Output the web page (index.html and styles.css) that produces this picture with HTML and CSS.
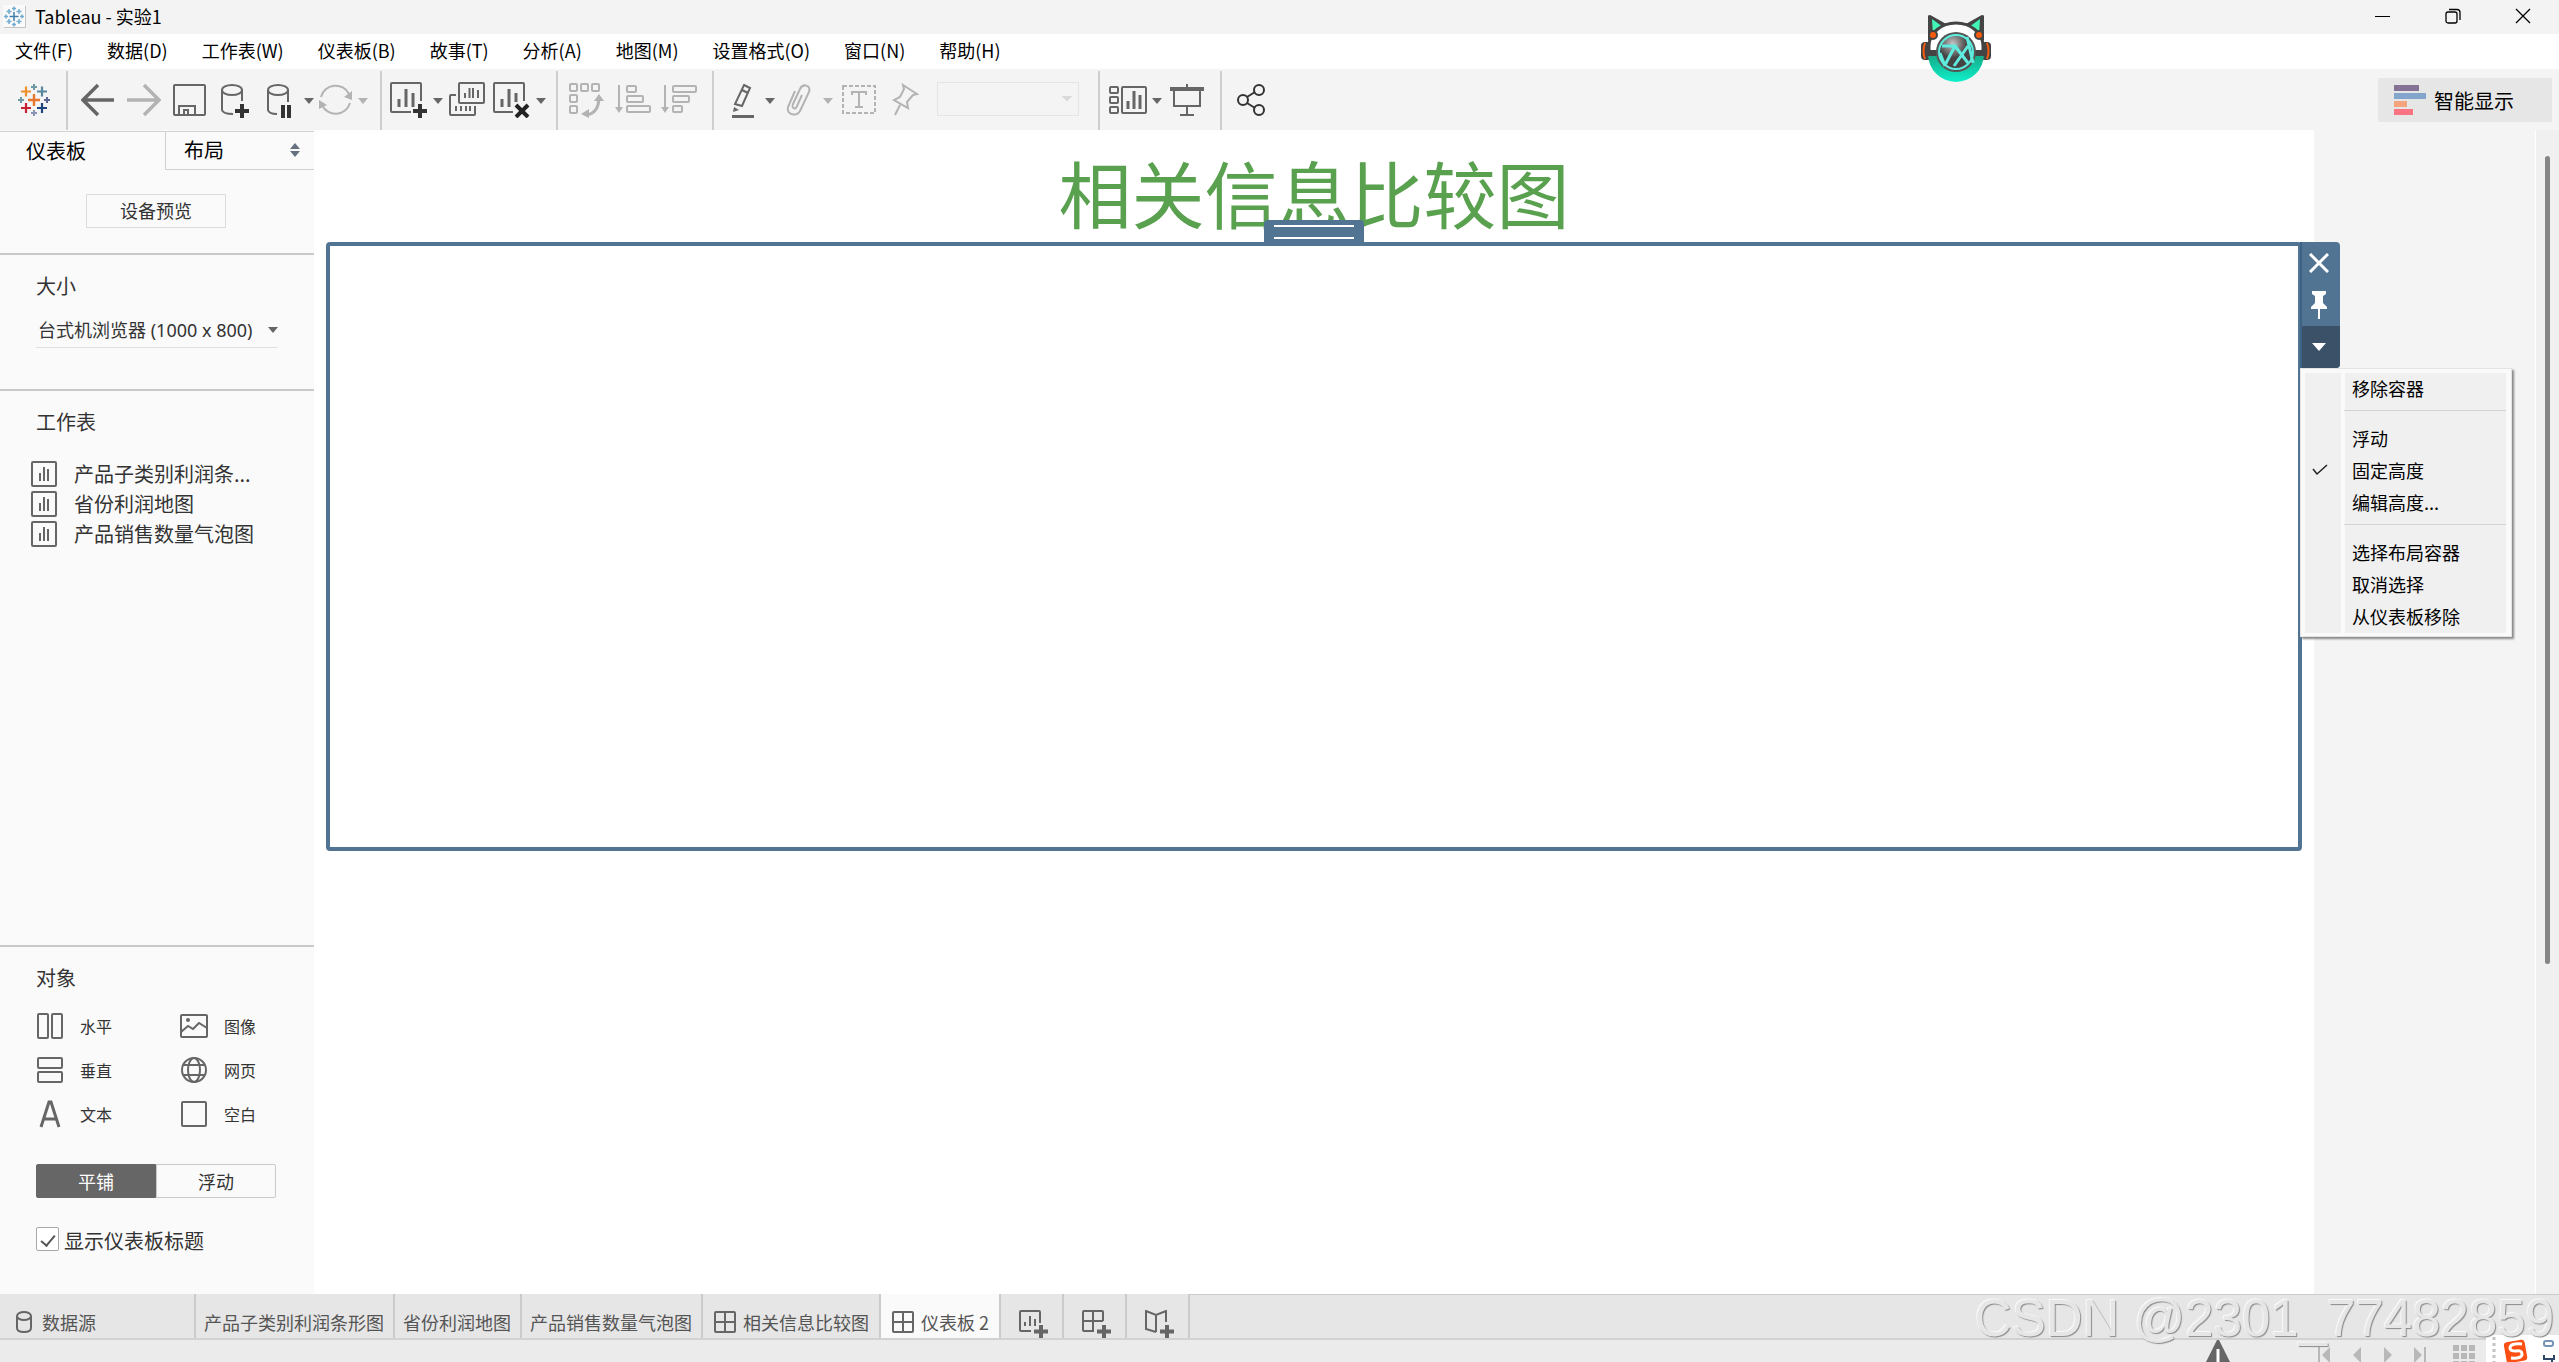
FILE: index.html
```html
<!DOCTYPE html>
<html lang="zh-CN">
<head>
    <meta charset="UTF-8">
    <meta name="viewport" content="width=device-width, initial-scale=1.0">
    <title>Tableau - 实验1</title>
    <link rel="stylesheet" href="styles.css">
</head>
<body>
    <!-- shared icons -->
    <svg class="sprite" aria-hidden="true">
        <symbol id="caret" viewBox="0 0 10 6"><path d="M0 0h10L5 6z" fill="currentColor"/></symbol>
        <symbol id="sheet" viewBox="0 0 26 26">
            <rect x="1" y="1" width="24" height="24" rx="1" fill="none" stroke="#666" stroke-width="2"/>
            <path d="M9 12v8M13 6v14M17 8v12" stroke="#666" stroke-width="2"/>
        </symbol>
        <symbol id="board" viewBox="0 0 22 22">
            <path d="M2 1h18q1 0 1 1v18q0 1-1 1H2q-1 0-1-1V2q0-1 1-1zM11 1v20M1 11h20" fill="none" stroke="#666" stroke-width="2"/>
        </symbol>
    </svg>

    <header class="titlebar">
        <svg class="app-icon" width="23" height="23" viewBox="0 0 23 23">
            <rect width="22" height="22" fill="#fafafa"/>
            <path d="M22.500 1v21.500H1" fill="none" stroke="#c4c4c4"/>
            <path d="M11 7v9M6.500 11.500h9" stroke="#3f7fa8" stroke-width="1.500"/>
            <path d="M6 4v5M3.500 6.500h5M16 4v5M13.500 6.500h5M6 14v5M3.500 16.500h5M16 14v5M13.500 16.500h5M11 1.500v4M9 3.500h4M11 17.500v4M9 19.500h4M3 9.500v4M1 11.500h4M19 9.500v4M17 11.500h4" stroke="#72acd0" stroke-width="1.500"/>
        </svg>
        <span class="app-title">Tableau - 实验1</span>
        <div class="window-buttons">
            <button aria-label="最小化"><svg width="16" height="16"><path d="M0 8.500h15" stroke="#000"/></svg></button>
            <button aria-label="还原"><svg width="16" height="16" fill="none" stroke="#000" stroke-width="1.300"><rect x="1" y="4" width="11" height="11" rx="2"/><path d="M4 1.500h8q3 0 3 3V12"/></svg></button>
            <button aria-label="关闭"><svg width="16" height="16"><path d="M1 1l14 14M15 1L1 15" stroke="#000" stroke-width="1.300"/></svg></button>
        </div>
    </header>

    <nav class="menubar">
        <button>文件(F)</button>
        <button>数据(D)</button>
        <button>工作表(W)</button>
        <button>仪表板(B)</button>
        <button>故事(T)</button>
        <button>分析(A)</button>
        <button>地图(M)</button>
        <button>设置格式(O)</button>
        <button>窗口(N)</button>
        <button>帮助(H)</button>
    </nav>

    <div class="toolbar">
        <div class="group group-logo">
            <button class="tool" aria-label="起始页">
                <svg width="34" height="36" viewBox="0 0 34 36" fill="none">
                    <path d="M17 12v12M11 18h12" stroke="#e8762c" stroke-width="2.400"/>
                    <path d="M9 4.500v10M4 9.500h10" stroke="#eb912b" stroke-width="2.200"/>
                    <path d="M25 4.500v10M20 9.500h10" stroke="#59879b" stroke-width="2.200"/>
                    <path d="M9 21v10M4 26h10" stroke="#c72035" stroke-width="2.200"/>
                    <path d="M25 21v10M20 26h10" stroke="#1f447e" stroke-width="2.200"/>
                    <path d="M17 2v6M14 5h6M4 15v6M1 18h6" stroke="#7099a5" stroke-width="2"/>
                    <path d="M30 15v6M27 18h6" stroke="#5b6591" stroke-width="2"/>
                    <path d="M17 28v6M14 31h6" stroke="#8a93b5" stroke-width="2"/>
                </svg>
            </button>
        </div>

        <div class="group group-file">
            <button class="tool" aria-label="撤消"><svg width="34" height="36" fill="none" stroke="#666" stroke-width="3.500"><path d="M33 18H3M17 3L2 18l15 15"/></svg></button>
            <button class="tool off" aria-label="重做"><svg width="34" height="36" fill="none" stroke="#b3b3b3" stroke-width="3.500"><path d="M0 18h31M17 3l15 15-15 15"/></svg></button>
            <button class="tool" aria-label="保存"><svg width="34" height="36" fill="none" stroke="#666" stroke-width="2"><rect x="1" y="3" width="31" height="30" rx="1"/><path d="M6 33V24h16v9M11 33v-5h4v5"/></svg></button>
            <button class="tool" aria-label="新建数据源"><svg width="34" height="36" fill="none" stroke="#666" stroke-width="2"><ellipse cx="13" cy="8" rx="10" ry="5"/><path d="M3 8v20q1 4 11 4M23 8v11"/><path d="M23 22v14M16 29h14" stroke="#333" stroke-width="4"/></svg></button>
            <button class="tool" aria-label="暂停自动更新"><svg width="34" height="36" fill="none" stroke="#666" stroke-width="2"><ellipse cx="13" cy="8" rx="10" ry="5"/><path d="M3 8v20q1 4 9 4M23 8v12"/><path d="M18 23v13M24 23v13" stroke="#333" stroke-width="4"/></svg></button>
            <button class="caret" aria-label="更多更新选项"><svg width="10" height="6"><use href="#caret"/></svg></button>
            <button class="tool off" aria-label="运行更新"><svg width="34" height="36" fill="none" stroke="#b3b3b3" stroke-width="2"><path d="M2 15A15 15 0 0 1 30 12M31 21A15 15 0 0 1 3 23"/><path d="M33 9v9l-8-3zM0 18v9l8-4z" fill="#b3b3b3" stroke="none"/></svg></button>
            <button class="caret off" aria-label="更多运行选项"><svg width="10" height="6"><use href="#caret"/></svg></button>
        </div>

        <div class="group group-sheets">
            <button class="tool" aria-label="新建工作表"><svg width="38" height="36" fill="none" stroke="#666" stroke-width="2"><path d="M21 30H2q-1 0-1-1V2q0-1 1-1h28q1 0 1 1v17"/><path d="M9 17v8M16 7v18M23 11v14" stroke-width="3"/><path d="M30 22v14M23 29h14" stroke="#333" stroke-width="4"/></svg></button>
            <button class="caret" aria-label="新建选项"><svg width="10" height="6"><use href="#caret"/></svg></button>
            <button class="tool" aria-label="复制"><svg width="38" height="36" fill="none" stroke="#666" stroke-width="2"><rect x="11" y="1" width="25" height="20" rx="1"/><path d="M8 13H3q-1 0-1 1v18q0 1 1 1h23q1 0 1-1v-8M17 16v-5M21.500 16V6M25 16V6M30 16V8M8 29v-5M13 29v-5M18 29v-5M22 29v-5"/></svg></button>
            <button class="tool" aria-label="清除工作表"><svg width="38" height="36" fill="none" stroke="#666" stroke-width="2"><path d="M20 30H2q-1 0-1-1V2q0-1 1-1h28q1 0 1 1v17"/><path d="M9 17v8M16 7v18M23 11v9" stroke-width="3"/><path d="M23 23l12 12M35 23L23 35" stroke="#222" stroke-width="4"/></svg></button>
            <button class="caret" aria-label="清除选项"><svg width="10" height="6"><use href="#caret"/></svg></button>
        </div>

        <div class="group group-sort">
            <button class="tool off" aria-label="交换行和列"><svg width="36" height="36" fill="none" stroke="#b3b3b3" stroke-width="2"><rect x="1" y="2" width="7" height="7" rx="1"/><rect x="12" y="2" width="7" height="7" rx="1"/><rect x="23" y="2" width="7" height="7" rx="1"/><rect x="1" y="13" width="7" height="7" rx="1"/><rect x="1" y="24" width="7" height="7" rx="1"/><path d="M30 17q-1 14-12 16" stroke-width="3"/><path d="M25 19l5-7 5 7zM20 27v9l-8-4z" fill="#b3b3b3" stroke="none"/></svg></button>
            <button class="tool off" aria-label="升序排序"><svg width="36" height="36" fill="none" stroke="#b3b3b3" stroke-width="2"><path d="M4 3v23"/><path d="M0 25h8l-4 6z" fill="#b3b3b3" stroke="none"/><rect x="12" y="4" width="9" height="6" rx="1"/><rect x="12" y="14" width="16" height="6" rx="1"/><rect x="12" y="24" width="23" height="6" rx="1"/></svg></button>
            <button class="tool off" aria-label="降序排序"><svg width="36" height="36" fill="none" stroke="#b3b3b3" stroke-width="2"><path d="M4 3v23"/><path d="M0 25h8l-4 6z" fill="#b3b3b3" stroke="none"/><rect x="12" y="4" width="23" height="6" rx="1"/><rect x="12" y="14" width="16" height="6" rx="1"/><rect x="12" y="24" width="9" height="6" rx="1"/></svg></button>
        </div>

        <div class="group group-format">
            <button class="tool" aria-label="突出显示"><svg width="38" height="36" fill="none" stroke="#666" stroke-width="2"><path d="M22 3l6 3-8 18-7-2zM20 8l6 3"/><path d="M12 25l5 3-6 2z" fill="#666" stroke="none"/><path d="M10 34.500h22" stroke-width="3"/></svg></button>
            <button class="caret" aria-label="突出显示选项"><svg width="10" height="6"><use href="#caret"/></svg></button>
            <button class="tool off" aria-label="组成员"><svg width="38" height="36" fill="none" stroke="#b3b3b3" stroke-width="2"><path d="M22 13l-5 11c-1 4-6 3-4-2l7-15c3-6 11-4 9 3l-9 19c-3 6-14 4-12-4l7-16"/></svg></button>
            <button class="caret off" aria-label="分组选项"><svg width="10" height="6"><use href="#caret"/></svg></button>
            <button class="tool off" aria-label="显示标记标签"><svg width="38" height="36" fill="none" stroke="#b3b3b3" stroke-width="2"><rect x="5" y="4" width="32" height="27" stroke-dasharray="4 2"/><path d="M14 13V10h14v3M21 10v15M17 25h8"/></svg></button>
            <button class="tool off" aria-label="固定轴"><svg width="38" height="36" fill="none" stroke="#b3b3b3" stroke-width="2"><path d="M17 3l14 9-4 1-6 7 1 6-14-8 6-3 4-8zM14 23L9 33"/></svg></button>
            <select class="fit-select" disabled aria-label="适合"></select>
        </div>

        <div class="group group-view">
            <button class="tool" aria-label="显示/隐藏卡"><svg width="38" height="36" fill="none" stroke="#666" stroke-width="2"><rect x="1" y="5" width="8" height="6" rx="1"/><rect x="1" y="15" width="8" height="6" rx="1"/><rect x="1" y="25" width="8" height="6" rx="1"/><rect x="13" y="5" width="24" height="26" rx="1"/><path d="M19 19v8M25 9v18M31 13v14" stroke-width="3"/></svg></button>
            <button class="caret" aria-label="卡选项"><svg width="10" height="6"><use href="#caret"/></svg></button>
            <button class="tool" aria-label="演示模式"><svg width="38" height="36" fill="none" stroke="#666" stroke-width="2"><path d="M3 7h34" stroke-width="4"/><rect x="7" y="8" width="26" height="16"/><path d="M20 2v5M20 24v9M13 33h14"/></svg></button>
        </div>

        <div class="group group-share">
            <button class="tool" aria-label="共享"><svg width="38" height="36" fill="none" stroke="#333" stroke-width="2"><circle cx="11" cy="18" r="5"/><circle cx="27" cy="8" r="5"/><circle cx="27" cy="28" r="5"/><path d="M15 15l8-5M15 21l8 5"/></svg></button>
        </div>

        <button class="show-me">
            <svg width="32" height="30"><path d="M0 0h25v6H0z" fill="#857396"/><path d="M0 8h32v6H0z" fill="#84a5cb"/><path d="M0 16h13v6H0z" fill="#f4a57e"/><path d="M0 24h19v6H0z" fill="#f97383"/></svg>
            智能显示
        </button>
    </div>

    <div class="workspace">
        <aside class="sidebar">
            <div class="pane-tabs">
                <button class="pane-tab active">仪表板</button>
                <button class="pane-tab">布局
                    <svg width="10" height="14"><path d="M5 0l5 6H0zM0 8h10l-5 6z" fill="#667282"/></svg>
                </button>
            </div>
            <section class="device">
                <button class="preview">设备预览</button>
            </section>
            <section class="panel">
                <h2><label for="size">大小</label></h2>
                <div class="size-box">
                    <select id="size"><option>台式机浏览器 (1000 x 800)</option></select>
                    <svg width="10" height="6"><use href="#caret"/></svg>
                </div>
            </section>
            <section class="panel sheets">
                <h2>工作表</h2>
                <ul>
                    <li><svg width="26" height="26"><use href="#sheet"/></svg><span>产品子类别利润条...</span></li>
                    <li><svg width="26" height="26"><use href="#sheet"/></svg><span>省份利润地图</span></li>
                    <li><svg width="26" height="26"><use href="#sheet"/></svg><span>产品销售数量气泡图</span></li>
                </ul>
            </section>
            <section class="panel objects">
                <h2>对象</h2>
                <div class="object-grid">
                    <button><svg width="28" height="28" fill="none" stroke="#666" stroke-width="2"><rect x="2" y="2" width="10" height="24" rx="1"/><rect x="16" y="2" width="10" height="24" rx="1"/></svg>水平</button>
                    <button><svg width="28" height="28" fill="none" stroke="#666" stroke-width="2"><rect x="1" y="3" width="26" height="22" rx="1"/><path d="M1 20l7-6 5 3 6-6 8 5"/><circle cx="8" cy="8" r="2" fill="#666" stroke="none"/></svg>图像</button>
                    <button><svg width="28" height="28" fill="none" stroke="#666" stroke-width="2"><rect x="2" y="2" width="24" height="10" rx="1"/><rect x="2" y="16" width="24" height="10" rx="1"/></svg>垂直</button>
                    <button><svg width="28" height="28" fill="none" stroke="#666" stroke-width="2"><circle cx="14" cy="14" r="12"/><ellipse cx="14" cy="14" rx="6" ry="12"/><path d="M3 9h22M3 19h22"/></svg>网页</button>
                    <button><svg width="28" height="28" fill="none" stroke="#666" stroke-width="3"><path d="M5 27L13 2h2l8 25M8 19h12"/></svg>文本</button>
                    <button><svg width="28" height="28" fill="none" stroke="#666" stroke-width="2"><rect x="2" y="2" width="24" height="24" rx="1"/></svg>空白</button>
                </div>
                <div class="segmented">
                    <button class="active">平铺</button>
                    <button>浮动</button>
                </div>
                <label class="show-title"><input type="checkbox" checked>显示仪表板标题</label>
            </section>
        </aside>

        <main class="dashboard">
            <h1>相关信息比较图</h1>
            <div class="layout-container">
                <div class="drag-handle"></div>
                <div class="container-tools">
                    <button aria-label="移除"><svg width="20" height="20"><path d="M1 1l18 18M19 1L1 19" stroke="#fff" stroke-width="3"/></svg></button>
                    <button aria-label="固定"><svg width="16" height="28"><path d="M1 0h14v3l-3 2v7l4 4v2H9v10H7V18H0v-2l4-4V5L1 3z" fill="#fff"/></svg></button>
                    <button class="open" aria-label="更多选项"><svg width="14" height="8"><path d="M0 0h14L7 8z" fill="#fff"/></svg></button>
                    <ul class="context-menu">
                        <li><button>移除容器</button></li>
                        <li class="divider"></li>
                        <li><button>浮动</button></li>
                        <li class="checked"><svg width="16" height="12"><path d="M1 5l4 5L15 1" fill="none" stroke="#222" stroke-width="1.500"/></svg><button>固定高度</button></li>
                        <li><button>编辑高度...</button></li>
                        <li class="divider"></li>
                        <li><button>选择布局容器</button></li>
                        <li><button>取消选择</button></li>
                        <li><button>从仪表板移除</button></li>
                    </ul>
                </div>
            </div>
        </main>
        <div class="outside"></div>
        <div class="scroll-track"><div class="scroll-thumb"></div></div>
    </div>

    <nav class="sheet-tabs">
        <button class="source"><svg width="16" height="22" fill="none" stroke="#666" stroke-width="2"><ellipse cx="8" cy="5" rx="7" ry="4"/><path d="M1 5v12q0 4 7 4t7-4V5"/></svg>数据源</button>
        <button>产品子类别利润条形图</button>
        <button>省份利润地图</button>
        <button>产品销售数量气泡图</button>
        <button class="board"><svg width="22" height="22"><use href="#board"/></svg>相关信息比较图</button>
        <button class="board active"><svg width="22" height="22"><use href="#board"/></svg>仪表板 2</button>
        <button class="new" aria-label="新建工作表"><svg width="30" height="28" fill="none" stroke="#666" stroke-width="2"><path d="M12 21H2q-1 0-1-1V2q0-1 1-1h18q1 0 1 1v11M6 12v4M11 6v10M16 9v7"/><path d="M22 15v13M15 21.500h14" stroke-width="4"/></svg></button>
        <button class="new" aria-label="新建仪表板"><svg width="30" height="28" fill="none" stroke="#666" stroke-width="2"><path d="M12 21H2q-1 0-1-1V2q0-1 1-1h18q1 0 1 1v9M11 1v20M1 11h20"/><path d="M22 15v13M15 21.500h14" stroke-width="4"/></svg></button>
        <button class="new" aria-label="新建故事"><svg width="30" height="28" fill="none" stroke="#666" stroke-width="2"><path d="M11 22L1 19V1l10 4 10-4v11M11 5v17"/><path d="M22 15v13M15 21.500h14" stroke-width="4"/></svg></button>
        <div class="filler"></div>
    </nav>

    <footer class="statusbar">
        <svg class="warning" width="26" height="24"><path d="M13 0h1l12 24H0L12 0z" fill="#666"/><path d="M13 9v13" stroke="#fff" stroke-width="3"/></svg>
        <div class="pager">
            <button aria-label="第一张"><svg width="12" height="16" fill="#b8b8b8"><path d="M0 0h2v16H0zM12 0v16L4 8z"/></svg></button>
            <button aria-label="上一张"><svg width="12" height="16" fill="#b8b8b8"><path d="M11 0v16L3 8z"/></svg></button>
            <button aria-label="下一张"><svg width="12" height="16" fill="#b8b8b8"><path d="M2 0v16l8-8z"/></svg></button>
            <button aria-label="最后一张"><svg width="12" height="16" fill="#b8b8b8"><path d="M10 0h2v16h-2zM0 0v16l8-8z"/></svg></button>
        </div>
        <button class="sorter" aria-label="工作表排序程序"><svg width="22" height="18" fill="#b8b8b8"><path d="M0 0h6v6H0zM8 0h6v6H8zM16 0h6v6h-6zM0 8h6v6H0zM8 8h6v6H8zM16 8h6v6h-6zM0 16h6v2H0zM8 16h6v2H8zM16 16h6v2h-6z"/></svg></button>
    </footer>

    <!-- floating input method bar -->
    <div class="ime">
        <svg width="73" height="27" fill="none">
            <path d="M8 2v25" stroke="#c4c4c4" stroke-width="3" stroke-dasharray="3 3"/>
            <rect x="19" y="6" width="21" height="21" rx="3" fill="#fb4f14" transform="rotate(-10 29 16)"/>
            <path d="M36 9q-12-1-12 4 0 3 6 3 6-1 6 3 0 5-11 4" stroke="#fff" stroke-width="3"/>
            <rect x="58" y="6" width="9" height="5" rx="2" stroke="#7594b8" stroke-width="2"/>
            <path d="M58 20v4h10v-4M66 24v3" stroke="#2e4668" stroke-width="2"/>
        </svg>
    </div>

    <!-- desktop mascot -->
    <div class="mascot">
        <svg width="72" height="68" viewBox="0 0 72 68">
            <defs>
                <linearGradient id="face" x1="0" y1="0" x2="0" y2="1"><stop offset="0" stop-color="#16a884"/><stop offset="1" stop-color="#0ff0cc"/></linearGradient>
                <radialGradient id="disc" cx=".4" cy=".25" r=".7"><stop offset="0" stop-color="#c4c4c4"/><stop offset=".6" stop-color="#444"/></radialGradient>
            </defs>
            <rect x="1" y="28" width="14" height="18" rx="4" fill="#444"/>
            <rect x="57" y="28" width="14" height="18" rx="4" fill="#444"/>
            <path d="M5 29q-3 8 0 16M67 29q3 8 0 16" fill="none" stroke="#f55a10" stroke-width="2"/>
            <path d="M8 26V2q1-2 4 0l16 9h16L60 2q3-2 4 0v24z" fill="#444"/>
            <path d="M12 5l11 8-10 8zM60 5l-11 8 10 8z" fill="#42f5b4"/>
            <path d="M8 40a28 28 0 0 0 56 0z" fill="url(#face)"/>
            <path d="M9 40V32a27 23 0 0 1 54 0v8z" fill="#fff" stroke="#444" stroke-width="3"/>
            <circle cx="13" cy="21" r="4" fill="#f55a10" stroke="#444" stroke-width="2"/>
            <circle cx="59" cy="21" r="4" fill="#f55a10" stroke="#444" stroke-width="2"/>
            <path d="M8 36h56v6H8z" fill="#444"/>
            <circle cx="36" cy="38" r="20" fill="#555"/>
            <circle cx="36" cy="38" r="17" fill="url(#disc)" stroke="#5fecdf" stroke-width="2"/>
            <path d="M22 32h13L25 51M35 32l13 17M48 32L34 52M47 23l6 26M25 52l-5-13" fill="none" stroke="#5fecdf" stroke-width="3"/>
        </svg>
    </div>

    <div class="watermark">CSDN @2301_77482859</div>
</body>
</html>
```

FILE: styles.css
```css
* {
    box-sizing: border-box;
}
body {
    margin: 0;
    height: 100vh;
    display: flex;
    flex-direction: column;
    position: relative;
    overflow: hidden;
    font-family: "Noto Sans CJK SC", sans-serif;
    font-size: 18px;
    color: #333;
    background-color: #fff;
}
button, select {
    font: inherit;
    color: inherit;
    background: none;
    border: none;
    padding: 0;
    margin: 0;
    white-space: nowrap;
}
svg {
    display: block;
    flex: none;
}
ul {
    list-style: none;
    margin: 0;
    padding: 0;
}
.sprite {
    position: absolute;
    width: 0;
    height: 0;
}

/* title bar and menus */
.titlebar {
    height: 34px;
    flex: none;
    display: flex;
    align-items: center;
    padding: 0 28px 2px 3px;
    background-color: #f3f3f3;
    color: #000;
}
.app-title {
    margin-left: 9px;
    line-height: 30px;
}
.window-buttons {
    margin-left: auto;
    display: flex;
    gap: 54px;
}
.menubar {
    height: 35px;
    flex: none;
    display: flex;
    align-items: center;
    gap: 34px;
    padding: 0 0 3px 15px;
    color: #000;
}

/* toolbar */
.toolbar {
    height: 61px;
    flex: none;
    display: flex;
    padding-top: 2px;
    background-color: #f4f4f4;
}
.group {
    display: flex;
    align-items: flex-start;
    padding-top: 11px;
    border-right: 2px solid #cfcfcf;
}
.tool + .tool {
    margin-left: 10px;
}
.caret {
    margin: 16px 5px 0;
    color: #666;
}
.caret.off {
    color: #b3b3b3;
}
.group-logo {
    padding-left: 17px;
    padding-right: 15px;
}
.group-file {
    padding-left: 13px;
    padding-right: 7px;
}
.group-file .tool + .tool {
    margin-left: 12px;
}
.group-sheets {
    padding-left: 8px;
    padding-right: 5px;
}
.group-sheets .tool + .tool {
    margin-left: 7px;
}
.group-sort {
    padding-left: 11px;
    padding-right: 15px;
}
.group-format {
    padding-left: 8px;
    padding-right: 19px;
}
.group-view {
    padding-left: 9px;
    padding-right: 15px;
}
.group-share {
    padding-left: 10px;
    border-right: none;
}
.fit-select {
    appearance: none;
    width: 142px;
    height: 34px;
    margin-left: 13px;
    border: 1px solid #e0e0e0;
    background: linear-gradient(to bottom right, #d0d0d0 50%, transparent 50%) no-repeat 129px 13px / 5px 6px,
        linear-gradient(to bottom left, #d0d0d0 50%, transparent 50%) no-repeat 124px 13px / 5px 6px;
}
.show-me {
    display: flex;
    align-items: center;
    gap: 8px;
    width: 174px;
    height: 44px;
    margin: 7px 7px 0 auto;
    padding-left: 16px;
    background-color: #e6e6e6;
    color: #000;
    font-size: 20px;
}

/* left pane */
.workspace {
    flex: 1;
    min-height: 0;
    display: flex;
}
.sidebar {
    width: 314px;
    flex: none;
    display: flex;
    flex-direction: column;
    background-color: #fafafa;
}
.pane-tabs {
    height: 40px;
    flex: none;
    display: flex;
    padding-top: 1px;
}
.pane-tab {
    flex: 1;
    display: flex;
    align-items: center;
    justify-content: space-between;
    padding: 0 14px 2px 18px;
    border-top: 1px solid #d0d0d0;
    border-bottom: 1px solid #d0d0d0;
    font-size: 20px;
    color: #000;
}
.pane-tab.active {
    flex: none;
    width: 166px;
    padding-left: 26px;
    border-right: 1px solid #d0d0d0;
    border-bottom: none;
}
.device {
    display: flex;
    justify-content: center;
    padding: 24px 2px 25px 0;
}
.preview {
    width: 140px;
    height: 34px;
    padding-bottom: 2px;
    border: 1px solid #dcdcdc;
}
.panel {
    border-top: 2px solid #c9c9c9;
    padding: 16px 36px 41px;
}
.panel h2 {
    margin: 0;
    font-size: 20px;
    font-weight: normal;
    line-height: 30px;
}
.size-box {
    width: 242px;
    height: 32px;
    margin-top: 15px;
    padding-bottom: 3px;
    display: flex;
    align-items: center;
    border-bottom: 1px solid #e0e0e0;
    color: #666;
}
.size-box select {
    appearance: none;
    flex: 1;
    padding-left: 2px;
    font-family: "Noto Sans", "Noto Sans CJK SC", sans-serif;
    color: #333;
}
.sheets {
    flex: 1;
}
.sheets ul {
    margin: 22px 0 0 -5px;
}
.sheets li {
    height: 30px;
    display: flex;
    align-items: center;
    gap: 17px;
    font-size: 20px;
    line-height: 30px;
    white-space: nowrap;
}
.objects {
    padding-bottom: 38px;
}
.object-grid {
    display: grid;
    grid-template-columns: 144px 1fr;
    grid-auto-rows: 44px;
    margin-top: 11px;
}
.object-grid button {
    display: flex;
    align-items: center;
    gap: 16px;
    font-size: 16px;
}
.segmented {
    width: 240px;
    height: 34px;
    margin-top: 28px;
    display: flex;
}
.segmented button {
    flex: 1;
    padding-bottom: 1px;
    border: 1px solid #c9c9c9;
    border-radius: 0 2px 2px 0;
}
.segmented .active {
    background-color: #666;
    border-color: #666;
    border-radius: 2px 0 0 2px;
    color: #fff;
}
.show-title {
    display: flex;
    align-items: center;
    gap: 5px;
    margin-top: 28px;
    font-size: 20px;
    line-height: 30px;
}
.show-title input {
    appearance: none;
    width: 23px;
    height: 24px;
    margin: 0 0 4px;
    border: 1px solid #a8a8a8;
    border-radius: 2px;
    background-color: #fff;
    display: grid;
    place-items: center;
}
.show-title input:checked::after {
    content: "";
    width: 6px;
    height: 12px;
    border: solid #555;
    border-width: 0 2px 2px 0;
    transform: rotate(40deg);
}

/* dashboard canvas */
.dashboard {
    flex: 1;
    padding: 0 12px;
    background-color: #fff;
}
.dashboard h1 {
    margin: 0;
    padding-top: 10px;
    font-size: 73px;
    font-weight: normal;
    line-height: 102px;
    text-align: center;
    color: #59a14f;
}
.layout-container {
    height: 609px;
    position: relative;
    border: 4px solid #527493;
    border-radius: 4px;
}
.drag-handle {
    position: absolute;
    left: calc(50% - 50px);
    top: -26px;
    width: 100px;
    height: 24px;
    padding: 5px 10px 0;
    background-color: #527493;
    border-radius: 4px 4px 0 0;
}
.drag-handle::before {
    content: "";
    display: block;
    height: 10px;
    border-top: 2px solid #fff;
    border-bottom: 2px solid #fff;
}
.container-tools {
    position: absolute;
    left: calc(100% + 2px);
    top: -4px;
    z-index: 1;
    width: 40px;
    border-radius: 0 4px 4px 0;
    border-left: 2px solid #3d6286;
    background-color: #527493;
}
.container-tools > button {
    width: 100%;
    height: 42px;
    padding-right: 4px;
    display: flex;
    align-items: center;
    justify-content: center;
}
.container-tools > .open {
    background-color: #3b5168;
    border-radius: 0 0 4px 0;
}
.context-menu {
    position: absolute;
    left: -2px;
    top: 100%;
    width: 212px;
    padding: 4px 5px 3px 4px;
    border: 1px solid #e3e3e3;
    background: linear-gradient(to right, #f0f0f0 36px, #fafafa 36px, #fafafa 40px, #f0f0f0 40px) content-box, #fafafa;
    box-shadow: 2px 2px 2px #888;
    color: #000;
}
.context-menu li {
    height: 32px;
    display: flex;
    align-items: center;
    padding: 0 0 3px 47px;
}
.context-menu .divider {
    height: 1px;
    margin: 5px 0 12px 39px;
    padding: 0;
    background-color: #d4d4d4;
}
.context-menu .checked {
    padding-left: 7px;
    gap: 24px;
}
.outside {
    width: 221px;
    flex: none;
    background-color: #f4f4f4;
}
.scroll-track {
    width: 24px;
    flex: none;
    padding: 26px 10px 0 9px;
    background-color: #f0f0f0;
    border-left: 1px solid #fff;
}
.scroll-thumb {
    width: 5px;
    height: 71%;
    border-radius: 3px;
    background-color: #858585;
}

/* sheet tabs */
.sheet-tabs {
    height: 46px;
    flex: none;
    display: flex;
    background-color: #e6e6e6;
    border-bottom: 2px solid #d2d2d2;
    color: #555;
}
.sheet-tabs button {
    display: flex;
    align-items: center;
    padding: 12px 9px 0 8px;
    border-right: 2px solid #cbcbcb;
}
.sheet-tabs .source {
    width: 196px;
    padding-left: 16px;
    gap: 10px;
}
.sheet-tabs .board {
    padding-left: 11px;
    padding-right: 10px;
    gap: 7px;
}
.sheet-tabs .active {
    background-color: #fafafa;
}
.sheet-tabs .new {
    width: 63px;
    padding: 16px 0 0 18px;
}
.filler {
    flex: 1;
    border-top: 1px solid #cbcbcb;
}

/* status bar */
.statusbar {
    height: 22px;
    flex: none;
    display: flex;
    align-items: flex-start;
    justify-content: flex-end;
    padding-right: 84px;
    overflow: hidden;
    background-color: #ebebeb;
}
.warning {
    margin-right: 87px;
}
.pager {
    display: flex;
    gap: 20px;
    padding-top: 7px;
}
.sorter {
    margin: 5px 0 0 27px;
}
.ime {
    position: absolute;
    right: 0;
    bottom: 0;
    background-color: #fff;
}
.mascot {
    position: absolute;
    top: 14px;
    right: 567px;
}
.watermark {
    position: absolute;
    right: 5px;
    bottom: 13px;
    font-family: "Liberation Sans", sans-serif;
    font-size: 51px;
    line-height: 60px;
    color: #e6e6e6;
    text-shadow: 1px 1px 1px #8a8a8a, -1px -1px 1px #fafafa;
}
```
